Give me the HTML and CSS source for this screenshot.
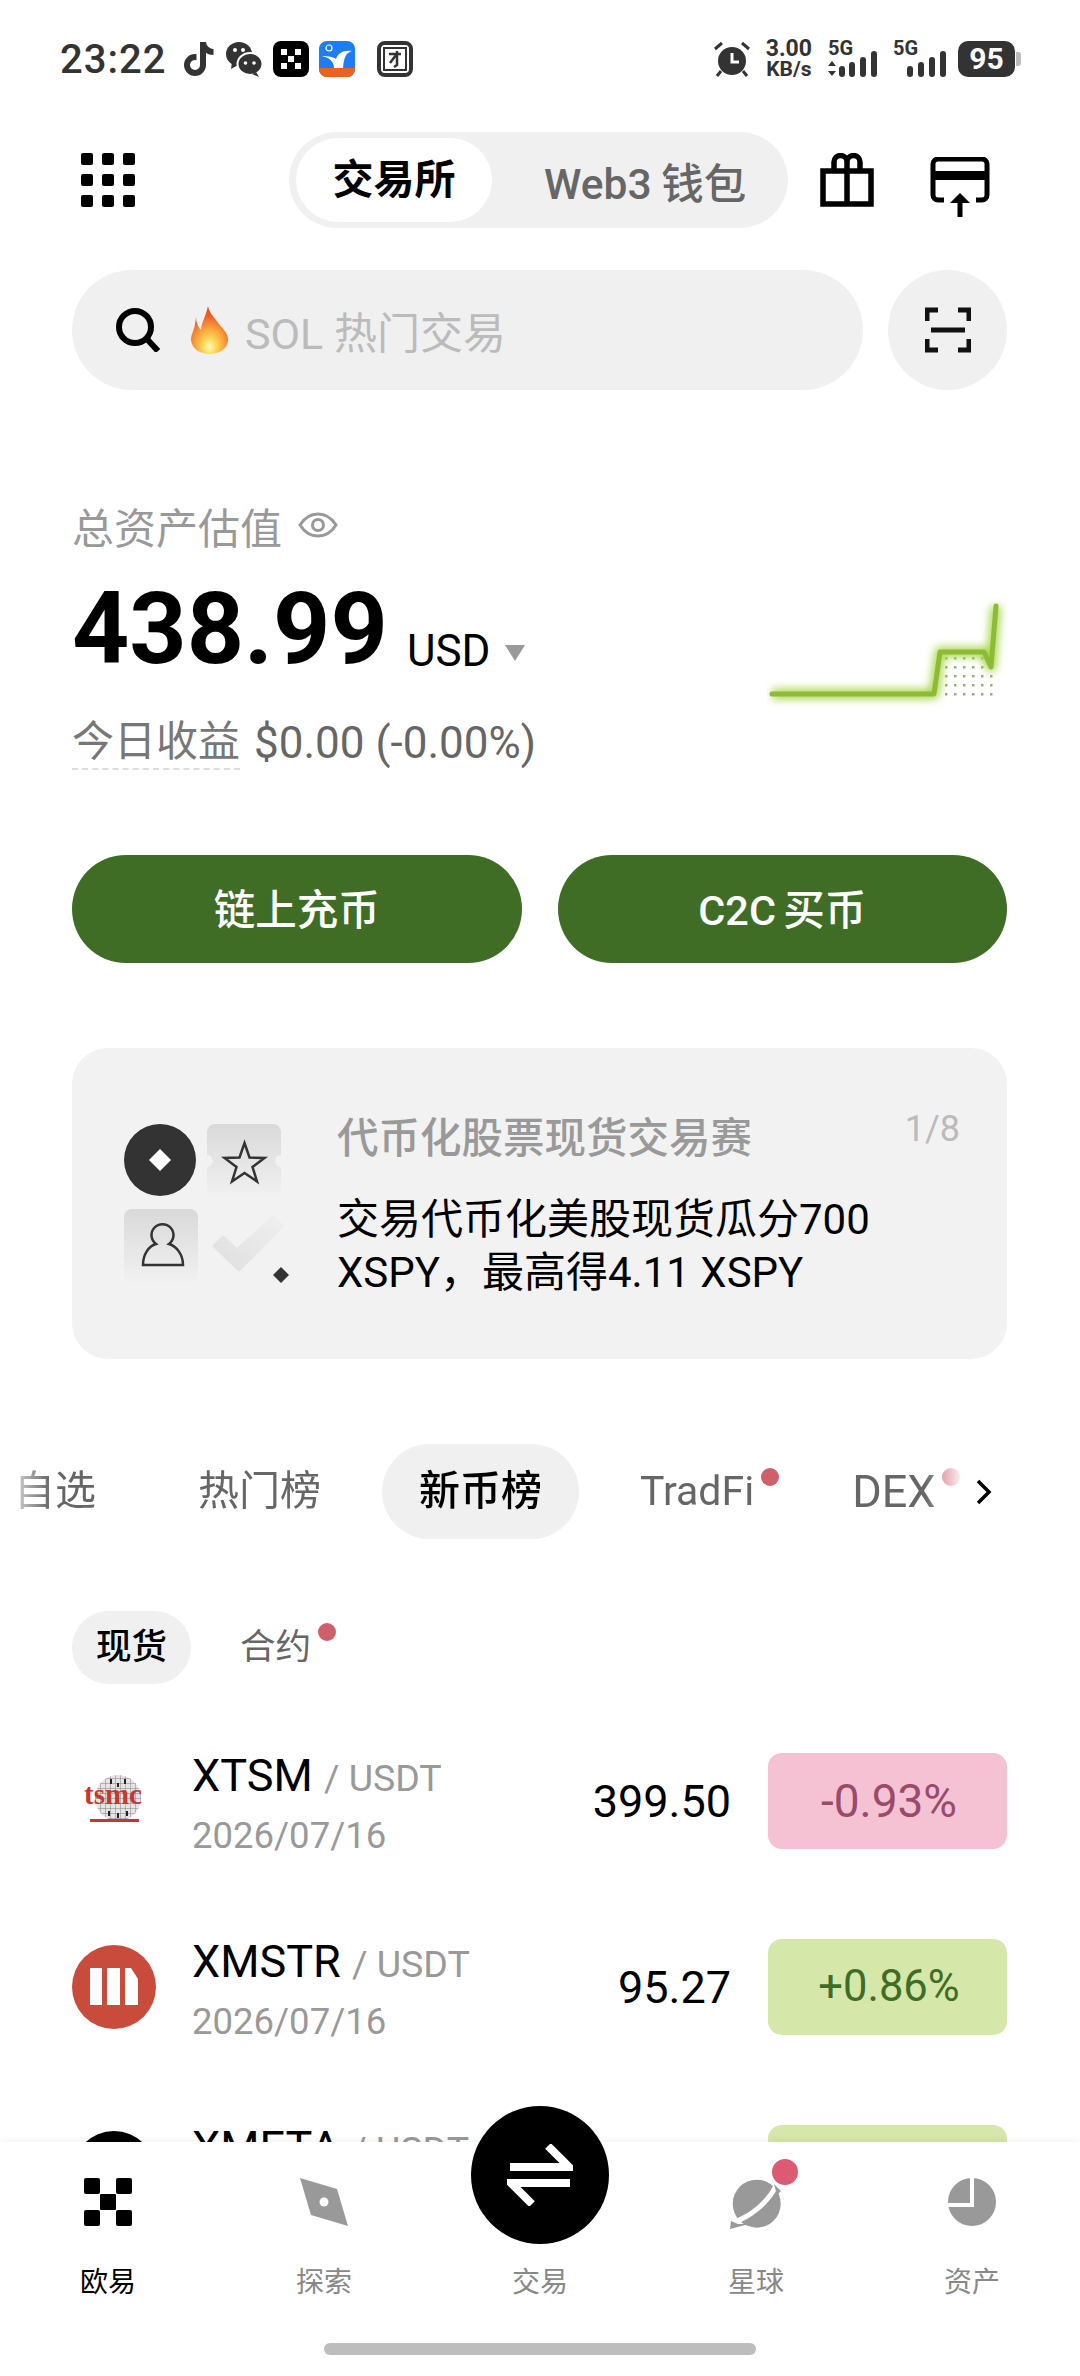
FILE: index.html
```html
<!DOCTYPE html>
<html lang="zh-CN">
<head>
    <meta charset="UTF-8">
    <meta name="viewport" content="width=device-width, initial-scale=1.0">
    <title>欧易</title>
    <link rel="stylesheet" href="styles.css">
</head>
<body>
<div class="phone">
    <div class="status-bar">
        <div class="status-left">
            <span class="time">23:22</span>
            <svg class="app tiktok" width="30" height="36" viewBox="0 0 30 36"><path d="M16 1h6c.6 4 3 6.500 7.500 7v6c-3 0-5.500-.8-7.500-2.200V24a11 11 0 1 1-11-11l1.500.1v6.200L11 19a5 5 0 1 0 5 5z" fill="#333"/></svg>
            <svg class="app wechat" width="36" height="36" viewBox="0 0 36 36"><ellipse cx="13" cy="13" rx="13" ry="12" fill="#333"/><path d="M6 21l-1 7 7-4z" fill="#333"/><circle cx="9" cy="9" r="2" fill="#fff"/><circle cx="17" cy="9" r="2" fill="#fff"/><ellipse cx="24" cy="23" rx="12.500" ry="11" fill="#333" stroke="#fff" stroke-width="2"/><path d="M30 31l3 5-7-3z" fill="#333"/><circle cx="19.500" cy="22" r="1.800" fill="#fff"/><circle cx="28" cy="22" r="1.800" fill="#fff"/></svg>
            <svg class="app" width="36" height="36" viewBox="0 0 36 36"><rect width="36" height="36" rx="8" fill="#000"/><path d="M8 8h6v6H8zM22 8h6v6h-6zM15 15h6v6h-6zM8 22h6v6H8zM22 22h6v6h-6z" fill="#fff"/></svg>
            <svg class="app" width="36" height="36" viewBox="0 0 36 36"><rect width="36" height="36" rx="8" fill="#1e7df0"/><path d="M0 27h36v1a8 8 0 0 1-8 8H8a8 8 0 0 1-8-8z" fill="#e8641e"/><path d="M3 15c6 0 12 1 14 3 2-6 7-9 16-8-6 2-8 6-9 17h-9c0-5-3-10-12-12z" fill="#fff"/><circle cx="10" cy="7" r="3" fill="none" stroke="#fff" stroke-width="1.200"/></svg>
            <svg class="app tuan" width="36" height="36" viewBox="0 0 36 36"><rect x="2" y="2" width="32" height="32" rx="6" fill="none" stroke="#333" stroke-width="4"/><rect x="7" y="7" width="22" height="22" fill="#fff" stroke="#333" stroke-width="2"/><path d="M12 13h12M20 10v14l-3 2M19 14l-6 8" fill="none" stroke="#333" stroke-width="2.500"/></svg>
        </div>
        <div class="status-right">
            <svg width="38" height="36" viewBox="0 0 38 36"><circle cx="19" cy="20" r="14" fill="#333"/><path d="M19 12v9h7" fill="none" stroke="#fff" stroke-width="3"/><path d="M2 8l7-6M36 8l-7-6M8 30l-4 5M30 30l4 5" stroke="#333" stroke-width="3"/></svg>
            <div class="speed"><span>3.00</span><span class="speed-unit">KB/s</span></div>
            <div class="signal signal-a">
                <span class="net">5G</span>
                <svg width="54" height="26" viewBox="0 0 54 26"><path d="M4 10l-4 5h8zM4 25l-4-5h8z" fill="#333"/><rect x="11" y="15" width="6" height="11" rx="3" fill="#333"/><rect x="21" y="11" width="6" height="15" rx="3" fill="#333"/><rect x="32" y="6" width="6" height="20" rx="3" fill="#333"/><rect x="43" y="0" width="6" height="26" rx="3" fill="#333"/></svg>
            </div>
            <div class="signal signal-b">
                <span class="net">5G</span>
                <svg width="40" height="26" viewBox="0 0 40 26"><rect x="0" y="15" width="6" height="11" rx="3" fill="#333"/><rect x="11" y="11" width="6" height="15" rx="3" fill="#333"/><rect x="22" y="6" width="6" height="20" rx="3" fill="#333"/><rect x="33" y="0" width="6" height="26" rx="3" fill="#333"/></svg>
            </div>
            <div class="battery">95</div>
        </div>
    </div>

    <header class="top-bar">
        <svg class="menu-icon" width="54" height="54" viewBox="0 0 54 54"><g fill="#000"><rect width="12" height="12" rx="2"/><rect x="21" width="12" height="12" rx="2"/><rect x="42" width="12" height="12" rx="2"/><rect y="21" width="12" height="12" rx="2"/><rect x="21" y="21" width="12" height="12" rx="2"/><rect x="42" y="21" width="12" height="12" rx="2"/><rect y="42" width="12" height="12" rx="2"/><rect x="21" y="42" width="12" height="12" rx="2"/><rect x="42" y="42" width="12" height="12" rx="2"/></g></svg>
        <div class="switch">
            <span class="switch-item active">交易所</span>
            <span class="switch-item">Web3 钱包</span>
        </div>
        <svg class="gift-icon" width="54" height="54" viewBox="0 0 54 54"><path d="M3 18h48v33H3zM27 18v33M27 18V9a6.500 6.500 0 0 0-13 0v9M27 18V9a6.500 6.500 0 0 1 13 0v9" fill="none" stroke="#000" stroke-width="5.500"/></svg>
        <svg class="card-icon" width="60" height="60" viewBox="0 0 60 60"><path d="M14 43H8a5 5 0 0 1-5-5V7a5 5 0 0 1 5-5h44a5 5 0 0 1 5 5v31a5 5 0 0 1-5 5h-6" fill="none" stroke="#000" stroke-width="5"/><rect x="3" y="14" width="54" height="9" fill="#000"/><path d="M30 60V42" stroke="#000" stroke-width="5"/><path d="M20 46l10-10 10 10z" fill="#000"/></svg>
    </header>

    <div class="search-row">
        <div class="search-box">
            <svg width="44" height="44" viewBox="0 0 44 44"><circle cx="19" cy="19" r="16" fill="none" stroke="#000" stroke-width="6"/><path d="M30 30l12 13" stroke="#000" stroke-width="6"/></svg>
            <svg class="flame" width="38" height="48" viewBox="0 0 38 48">
                <defs><radialGradient id="flameFill" cx=".5" cy=".85" r=".8"><stop offset="0" stop-color="#fff6c0"/><stop offset=".2" stop-color="#fddc5c"/><stop offset=".5" stop-color="#f9a03a"/><stop offset=".8" stop-color="#ee5e2a"/><stop offset="1" stop-color="#e24a2a"/></radialGradient></defs>
                <path d="M17 0C18 7 24 12 28 18C33 24 38 29 37 35C36 43 28 48 19 48C9 48 1 43 0 34C0 28 3 25 4 18L5 11C5 16 7 21 10 24C10 17 15 10 17 0Z" fill="url(#flameFill)"/>
            </svg>
            <span class="search-hint">SOL 热门交易</span>
        </div>
        <div class="scan-btn">
            <svg width="46" height="46" viewBox="0 0 46 46"><path d="M2 14V3h11M33 3h11v11M2 32v11h11M33 43h11V32" fill="none" stroke="#111" stroke-width="5"/><path d="M6 23h34" stroke="#111" stroke-width="5"/></svg>
        </div>
    </div>

    <section class="balance">
        <div class="balance-info">
            <div class="balance-label">
                <span>总资产估值</span>
                <svg width="40" height="26" viewBox="0 0 40 26"><path d="M2 13C7 5 13 2 20 2s13 3 18 11c-5 8-11 11-18 11S7 21 2 13z" fill="none" stroke="#999" stroke-width="3"/><circle cx="20" cy="13" r="5.500" fill="none" stroke="#999" stroke-width="3"/></svg>
            </div>
            <div class="balance-amount"><span class="amount">438.99</span><span class="currency">USD</span><span class="caret"></span></div>
            <div class="balance-today">
                <span class="today-label">今日收益</span>
                <span class="today-value">$0.00 (-0.00%)</span>
            </div>
        </div>
        <svg class="spark" width="240" height="115" viewBox="0 0 240 115">
            <defs>
                <pattern id="dots" x="178" y="62" width="9" height="9" patternUnits="userSpaceOnUse"><rect width="2.500" height="2.500" fill="#9aad72"/></pattern>
                <filter id="glow" x="-10%" y="-30%" width="120%" height="160%"><feGaussianBlur stdDeviation="4"/></filter>
            </defs>
            <rect x="178" y="62" width="54" height="45" fill="url(#dots)"/>
            <path d="M5 99H167L173 57H217L224 72L229 11" fill="none" stroke="#a6d64a" stroke-width="10" stroke-linejoin="round" filter="url(#glow)"/>
            <path d="M5 99H167L173 57H217L224 72L229 11" fill="none" stroke="#8cbc35" stroke-width="5" stroke-linecap="round" stroke-linejoin="round"/>
        </svg>
    </section>

    <div class="actions">
        <button class="action-btn">链上充币</button>
        <button class="action-btn">C2C 买币</button>
    </div>

    <div class="promo">
        <svg class="promo-art" width="170" height="170" viewBox="0 0 170 170">
            <defs>
                <linearGradient id="tile" x1="0" y1="0" x2="0" y2="1"><stop offset="0" stop-color="#d9d9d9"/><stop offset="1" stop-color="#f1f1f1"/></linearGradient>
                <linearGradient id="tick" x1="0" y1="1" x2="1" y2="0"><stop offset="0" stop-color="#dedede"/><stop offset="1" stop-color="#f0f0f0"/></linearGradient>
            </defs>
            <circle cx="36" cy="36" r="36" fill="#333"/>
            <path d="M36 25l11 11-11 11-11-11z" fill="#fff"/>
            <path d="M91 0h58a8 8 0 0 1 8 8v23a6 6 0 0 0 0 12v23a8 8 0 0 1-8 8H91a8 8 0 0 1-8-8V43a6 6 0 0 0 0-12V8a8 8 0 0 1 8-8z" fill="url(#tile)"/>
            <path d="M120.500 19l5 14.500 15 .5-12 9 4.500 14.500-12.500-8.500-12.500 8.500 4.500-14.500-12-9 15-.5z" fill="none" stroke="#333" stroke-width="2.500"/>
            <rect y="85" width="74" height="74" rx="8" fill="url(#tile)"/>
            <path d="M19 141H59C59 130 52 122 45 120A11 11 0 1 0 32 120C25 122 19 130 19 141Z" fill="none" stroke="#333" stroke-width="2.500"/>
            <path d="M88 122L99 111L113 124L149 91L161 102L115 148Z" fill="url(#tick)"/>
            <path d="M157 143l8 8-8 8-8-8z" fill="#333"/>
        </svg>
        <div class="promo-text">
            <div class="promo-head">
                <span class="promo-title">代币化股票现货交易赛</span>
                <span class="promo-count">1/8</span>
            </div>
            <p class="promo-body">交易代币化美股现货瓜分700 XSPY，最高得4.11 XSPY</p>
        </div>
    </div>

    <div class="market-tabs">
        <div class="market-scroll">
            <span class="market-tab">自选</span>
            <span class="market-tab">热门榜</span>
            <span class="market-tab active">新币榜</span>
            <span class="market-tab">TradFi<i class="dot"></i></span>
            <span class="market-tab wide">DEX<i class="dot"></i></span>
        </div>
        <svg class="market-more" width="18" height="26" viewBox="0 0 18 26"><path d="M3 2l11 11L3 24" fill="none" stroke="#000" stroke-width="3.500"/></svg>
    </div>

    <div class="sub-tabs">
        <span class="sub-tab active">现货</span>
        <span class="sub-tab">合约<i class="dot"></i></span>
    </div>

    <ul class="coin-list">
        <li class="coin-row">
            <div class="coin-logo">
                <svg width="66" height="56" viewBox="0 0 66 56">
                    <defs><pattern id="wafer" width="5" height="5" patternUnits="userSpaceOnUse"><path d="M0 0h5v5" fill="none" stroke="#777" stroke-width=".9"/></pattern></defs>
                    <circle cx="37" cy="25" r="23" fill="#e4e4e4"/>
                    <circle cx="37" cy="25" r="23" fill="url(#wafer)"/>
                    <path d="M30 6v5M44 6v5M37 10v4M28 38v5M37 40v5M46 38v5" stroke="#222" stroke-width="2"/>
                    <text class="tsmc-word" x="32" y="31">tsmc</text>
                    <rect x="9" y="46" width="49" height="3" fill="#c8372d"/>
                </svg>
            </div>
            <div class="coin-info">
                <div class="coin-name">XTSM <span class="coin-quote">/ USDT</span></div>
                <div class="coin-date">2026/07/16</div>
            </div>
            <div class="coin-price">399.50</div>
            <div class="coin-change down">-0.93%</div>
        </li>
        <li class="coin-row">
            <div class="coin-logo">
                <svg width="84" height="84" viewBox="0 0 84 84"><circle cx="42" cy="42" r="42" fill="#c84b3c"/><path d="M18 23h12v37H18zM35 23h13v37H35zM53 23h6l7 11v26H53z" fill="#fff"/></svg>
            </div>
            <div class="coin-info">
                <div class="coin-name">XMSTR <span class="coin-quote">/ USDT</span></div>
                <div class="coin-date">2026/07/16</div>
            </div>
            <div class="coin-price">95.27</div>
            <div class="coin-change up">+0.86%</div>
        </li>
        <li class="coin-row">
            <div class="coin-logo">
                <svg width="84" height="84" viewBox="0 0 84 84"><circle cx="42" cy="42" r="42" fill="#000"/></svg>
            </div>
            <div class="coin-info">
                <div class="coin-name">XMETA <span class="coin-quote">/ USDT</span></div>
            </div>
            <div class="coin-change up"></div>
        </li>
    </ul>

    <nav class="bottom-nav">
        <div class="nav-item current">
            <svg width="48" height="48" viewBox="0 0 48 48"><g fill="#000"><rect width="16" height="16" rx="2"/><rect x="32" width="16" height="16" rx="2"/><rect x="16" y="16" width="16" height="16" rx="1"/><rect y="32" width="16" height="16" rx="2"/><rect x="32" y="32" width="16" height="16" rx="2"/></g></svg>
            <span>欧易</span>
        </div>
        <div class="nav-item">
            <svg width="48" height="48" viewBox="0 0 48 48"><path d="M0 0l37 11 11 37-37-11z" fill="#999"/><circle cx="24" cy="24" r="4.500" fill="#fff"/></svg>
            <span>探索</span>
        </div>
        <div class="nav-item">
            <div class="trade-btn">
                <svg width="66" height="62" viewBox="0 0 66 62"><path d="M41 2l21 21H3M25 60L4 39h59" fill="none" stroke="#fff" stroke-width="8"/></svg>
            </div>
            <div class="nav-spacer"></div>
            <span>交易</span>
        </div>
        <div class="nav-item">
            <svg class="planet" width="52" height="52" viewBox="0 0 52 52"><circle cx="26.700" cy="25.700" r="24" fill="#999"/><path d="M46 8C38 24 22 38 2 45" fill="none" stroke="#fff" stroke-width="5"/><path d="M1 43L0 51L19 46L8 46z" fill="#999"/><path d="M44 6L51 13L47 17z" fill="#999"/></svg>
            <i class="nav-dot"></i>
            <span>星球</span>
        </div>
        <div class="nav-item">
            <svg width="48" height="48" viewBox="0 0 48 48"><circle cx="24" cy="24" r="24" fill="#999"/><path d="M24 0v27H0" fill="none" stroke="#fff" stroke-width="4"/></svg>
            <span>资产</span>
        </div>
        <div class="home-bar"></div>
    </nav>
</div>
</body>
</html>
```
FILE: styles.css
```css
* {
    box-sizing: border-box;
}

body {
    margin: 0;
    background-color: #fff;
    font-family: Roboto, "Noto Sans CJK SC", sans-serif;
    color: #000;
}

svg {
    display: block;
    flex-shrink: 0;
}

.phone {
    position: relative;
    width: 1080px;
    height: 2376px;
    overflow: hidden;
    background-color: #fff;
}

/* status bar */
.status-bar {
    height: 118px;
    padding: 0 65px 0 60px;
    display: flex;
    justify-content: space-between;
    align-items: center;
}

.status-left,
.status-right {
    display: flex;
    align-items: center;
}

.time {
    font-size: 40px;
    font-weight: 500;
    color: #333;
    letter-spacing: 1px;
    margin-right: 18px;
}

.app {
    margin-right: 10px;
}

.tiktok {
    margin-right: 12px;
}

.wechat {
    margin-right: 11px;
}

.tuan {
    margin-left: 12px;
}

.speed {
    display: flex;
    flex-direction: column;
    align-items: center;
    margin-left: 15px;
    font-size: 23px;
    font-weight: 700;
    line-height: 20px;
    color: #333;
}

.speed-unit {
    font-size: 21px;
}

.signal {
    position: relative;
    height: 36px;
    display: flex;
    flex-direction: column;
    justify-content: flex-end;
}

.signal-a {
    width: 54px;
    margin-left: 16px;
}

.signal-b {
    width: 54px;
    margin-left: 11px;
    padding-left: 14px;
}

.net {
    position: absolute;
    top: 0;
    left: 0;
    font-size: 20px;
    line-height: 14px;
    font-weight: 700;
    color: #333;
}

.battery {
    position: relative;
    width: 57px;
    height: 36px;
    margin-left: 11px;
    background-color: #333;
    border-radius: 10px;
    color: #fff;
    font-size: 30px;
    font-weight: 700;
    line-height: 36px;
    text-align: center;
}

.battery::after {
    content: "";
    position: absolute;
    right: -6px;
    top: 11px;
    width: 5px;
    height: 14px;
    background-color: #bbb;
    border-radius: 0 3px 3px 0;
}

/* top bar */
.top-bar {
    margin-top: 14px;
    height: 96px;
    padding-left: 81px;
    display: flex;
    align-items: center;
}

.switch {
    width: 499px;
    height: 96px;
    margin-left: 154px;
    padding: 6px 7px;
    background-color: #f0f0f0;
    border-radius: 48px;
    display: flex;
    align-items: center;
}

.switch-item {
    font-size: 42.500px;
    font-weight: 500;
    word-spacing: -1px;
    color: #666;
    margin-left: 52px;
}

.switch-item.active {
    width: 196px;
    height: 84px;
    margin-left: 0;
    background-color: #fff;
    border-radius: 42px;
    color: #000;
    font-size: 41px;
    font-weight: 700;
    line-height: 84px;
    text-align: center;
}

.gift-icon {
    margin-left: 32px;
}

.card-icon {
    margin: 13px 0 0 56px;
}

/* search */
.search-row {
    margin-top: 42px;
    padding: 0 73px 0 72px;
    display: flex;
    gap: 25px;
}

.search-box {
    flex: 1;
    height: 120px;
    padding-left: 44px;
    background-color: #f0f0f0;
    border-radius: 60px;
    display: flex;
    align-items: center;
}

.flame {
    margin-left: 31px;
}

.search-hint {
    margin-left: 16px;
    font-size: 43px;
    color: #bbb;
}

.scan-btn {
    width: 119px;
    height: 120px;
    background-color: #f0f0f0;
    border-radius: 50%;
    display: flex;
    align-items: center;
    justify-content: center;
}

/* balance */
.balance {
    margin-top: 107px;
    padding: 0 73px 0 72px;
    display: flex;
    justify-content: space-between;
}

.balance-label {
    height: 56px;
    display: flex;
    align-items: center;
    gap: 16px;
    font-size: 42px;
    color: #999;
}

.balance-amount {
    margin-top: 21px;
    height: 110px;
    line-height: 110px;
    white-space: nowrap;
}

.amount {
    font-size: 100px;
    font-weight: 700;
}

.currency {
    margin-left: 19px;
    font-size: 44px;
    vertical-align: -3px;
}

.caret {
    display: inline-block;
    margin-left: 15px;
    vertical-align: 2px;
    border-left: 10px solid transparent;
    border-right: 10px solid transparent;
    border-top: 16px solid #999;
}

.balance-today {
    margin-top: 31px;
    height: 56px;
    display: flex;
    align-items: center;
    gap: 14px;
    color: #666;
}

.today-label {
    color: #777;
    height: 54px;
    font-size: 42px;
    line-height: 52px;
    border-bottom: 2px dashed #ddd;
}

.today-value {
    font-size: 44px;
}

.spark {
    margin-top: 98px;
}

/* action buttons */
.actions {
    margin-top: 84px;
    padding: 0 73px 0 72px;
    display: flex;
    gap: 36px;
}

.action-btn {
    flex: 1;
    height: 108px;
    padding: 0 0 4px;
    border: none;
    border-radius: 54px;
    background-color: #3f6d26;
    color: #fff;
    font-family: inherit;
    font-size: 41.500px;
    font-weight: 500;
    word-spacing: -3px;
}

/* promo card */
.promo {
    margin: 85px 73px 0 72px;
    height: 311px;
    padding: 68px 47px 0 52px;
    background-color: #f2f2f2;
    border-radius: 36px;
    display: flex;
}

.promo-art {
    margin-top: 8px;
}

.promo-text {
    flex: 1;
    margin-left: 43px;
}

.promo-head {
    display: flex;
    justify-content: space-between;
}

.promo-title {
    font-size: 41.500px;
    font-weight: 500;
    line-height: 46px;
    color: #999;
}

.promo-count {
    font-size: 36px;
    line-height: 26px;
    color: #bbb;
}

.promo-body {
    margin: 31px 0 0;
    font-size: 42px;
    line-height: 53px;
    color: #000;
}

/* market tabs */
.market-tabs {
    margin-top: 85px;
    height: 95px;
    display: flex;
    align-items: center;
}

.market-scroll {
    width: 965px;
    height: 95px;
    overflow: hidden;
    display: flex;
    gap: 24px;
    -webkit-mask-image: linear-gradient(to right, transparent 0, #000 50px, #000 925px, transparent 965px);
    mask-image: linear-gradient(to right, transparent 0, #000 50px, #000 925px, transparent 965px);
}

.market-tab {
    position: relative;
    flex-shrink: 0;
    height: 95px;
    padding: 0 37px;
    border-radius: 48px;
    font-size: 41px;
    line-height: 95px;
    color: #666;
}

.market-tab:first-child {
    margin: 0 4px 0 -23px;
}

.market-tab.active {
    background-color: #f0f0f0;
    color: #000;
    font-weight: 500;
}

.market-tab.wide {
    font-size: 45px;
}

.market-more {
    margin-left: 10px;
}

.dot {
    position: absolute;
    width: 18px;
    height: 18px;
    border-radius: 50%;
    background-color: #cf5f6b;
}

.market-tab .dot {
    top: 24px;
    right: 12px;
}

/* sub tabs */
.sub-tabs {
    margin: 72px 0 0 72px;
    height: 73px;
    display: flex;
    gap: 25px;
}

.sub-tab {
    position: relative;
    height: 73px;
    padding: 0 24px;
    border-radius: 37px;
    font-size: 35.500px;
    line-height: 73px;
    color: #666;
}

.sub-tab.active {
    background-color: #f0f0f0;
    color: #000;
    font-weight: 500;
}

.sub-tab .dot {
    top: 12px;
    right: -1px;
}

/* coin rows */
.coin-list {
    list-style: none;
    margin: 69px 73px 0 72px;
    padding: 0;
    display: flex;
    flex-direction: column;
    gap: 90px;
}

.coin-row {
    height: 96px;
    display: flex;
    align-items: center;
}

.coin-logo {
    width: 84px;
    display: flex;
    justify-content: center;
}

.tsmc-word {
    font-family: "Liberation Serif", serif;
    font-size: 29px;
    font-weight: 700;
    fill: #c8372d;
    text-anchor: middle;
}

.coin-info {
    height: 96px;
    margin-left: 36px;
}

.coin-name {
    font-size: 45px;
    line-height: 46px;
}

.coin-quote {
    font-size: 37.500px;
    color: #999;
}

.coin-date {
    margin-top: 12px;
    font-size: 36.500px;
    line-height: 46px;
    color: #999;
}

.coin-price {
    margin-left: auto;
    font-size: 45px;
}

.coin-change {
    width: 239px;
    height: 96px;
    margin-left: 37px;
    padding-left: 3px;
    border-radius: 14px;
    font-size: 46px;
    line-height: 96px;
    text-align: center;
}

.coin-info + .coin-change {
    margin-left: auto;
}

.coin-change.down {
    background-color: #f4c2d3;
    color: #9a4a6a;
}

.coin-change.up {
    background-color: #d5e8aa;
    color: #3f6d26;
    font-size: 43.500px;
}

/* bottom nav */
.bottom-nav {
    position: absolute;
    left: 0;
    right: 0;
    bottom: 0;
    height: 234px;
    background-color: #fff;
    box-shadow: 0 -2px 8px rgba(0, 0, 0, 0.05);
    display: flex;
}

.nav-item {
    position: relative;
    flex: 1;
    padding-top: 36px;
    display: flex;
    flex-direction: column;
    align-items: center;
    font-size: 28px;
    color: #888;
}

.nav-item.current {
    color: #000;
}

.nav-item span {
    margin-top: 37px;
    line-height: 40px;
}

.nav-spacer {
    height: 48px;
}

.planet {
    margin: 0 0 -4px 0;
}

.nav-dot {
    position: absolute;
    top: 15px;
    left: 122px;
    width: 30px;
    height: 30px;
    background-color: #dc5a72;
    border: 2px solid #fff;
    border-radius: 50%;
}

.trade-btn {
    position: absolute;
    top: -36px;
    left: 39px;
    width: 138px;
    height: 138px;
    background-color: #000;
    border-radius: 50%;
    display: flex;
    align-items: center;
    justify-content: center;
}

.home-bar {
    position: absolute;
    left: 324px;
    bottom: 21px;
    width: 432px;
    height: 12px;
    background-color: #bdbdbd;
    border-radius: 6px;
}
```
